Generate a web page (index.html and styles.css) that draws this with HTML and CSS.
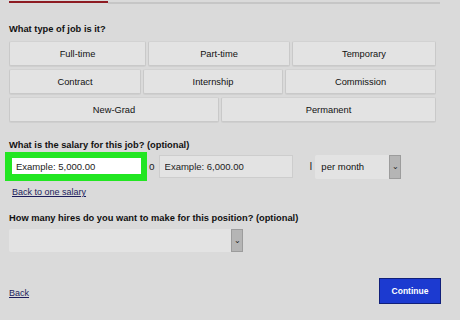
FILE: index.html
```html
<!DOCTYPE html>
<html lang="en">
<head>
    <meta charset="UTF-8">
    <meta name="viewport" content="width=device-width, initial-scale=1.0">
    <title>Job Details</title>
    <link rel="stylesheet" href="styles.css">
</head>
<body>
    <div class="progress">
        <div class="progress-done"></div>
        <div class="progress-rest"></div>
    </div>

    <form class="job-form">
        <h3 class="label">What type of job is it?</h3>
        <div class="choice-row row-a">
            <button type="button" class="choice">Full-time</button>
            <button type="button" class="choice">Part-time</button>
            <button type="button" class="choice">Temporary</button>
        </div>
        <div class="choice-row row-b">
            <button type="button" class="choice">Contract</button>
            <button type="button" class="choice">Internship</button>
            <button type="button" class="choice">Commission</button>
        </div>
        <div class="choice-row row-c">
            <button type="button" class="choice">New-Grad</button>
            <button type="button" class="choice">Permanent</button>
        </div>

        <h3 class="label salary-label">What is the salary for this job? (optional)</h3>
        <div class="salary-row">
            <div class="highlight">
                <input type="text" class="salary-from" placeholder="Example: 5,000.00">
            </div>
            <span class="sep">o</span>
            <input type="text" class="salary-to" placeholder="Example: 6,000.00">
            <span class="sep sep-per">I</span>
            <div class="select period">
                <span class="select-value">per month</span>
                <span class="select-arrow">&#8964;</span>
            </div>
        </div>
        <a href="#" class="small-link">Back to one salary</a>

        <h3 class="label hires-label">How many hires do you want to make for this position? (optional)</h3>
        <div class="select hires">
            <span class="select-value"></span>
            <span class="select-arrow">&#8964;</span>
        </div>

        <div class="footer">
            <a href="#" class="back-link">Back</a>
            <button type="button" class="continue-button">Continue</button>
        </div>
    </form>
</body>
</html>
```

FILE: styles.css
```css
body {
    margin: 0;
    font-family: "Liberation Sans", Arial, sans-serif;
    background-color: #dadada;
    color: #111;
}
.progress {
    display: flex;
    align-items: flex-start;
    margin: 1px 20px 0 9px;
}
.progress-done {
    width: 99px;
    height: 2px;
    background-color: #8e1b22;
}
.progress-rest {
    flex: 1;
    height: 2px;
    margin-top: 1px;
    background-color: #c6c6c6;
}
.job-form {
    padding: 0 24px 0 9px;
}
.label {
    font-size: 9.3px;
    font-weight: bold;
    line-height: 11px;
    margin: 20px 0 6px;
}
.choice-row {
    display: grid;
    column-gap: 2px;
    margin-bottom: 3px;
}
.row-a {
    grid-template-columns: 137fr 142fr 144fr;
}
.row-b {
    grid-template-columns: 132fr 140fr 151fr;
}
.row-c {
    grid-template-columns: 210fr 215fr;
}
.choice {
    height: 25px;
    font-family: inherit;
    font-size: 9.3px;
    color: #111;
    background-color: #e3e3e3;
    border: 1px solid #c9c9c9;
    border-top-color: #d2d2d2;
    border-radius: 2px;
    box-shadow: 0 1px 0 #cfcfcf;
}
.salary-label {
    margin: 18px 0 1px;
}
.salary-row {
    display: flex;
    align-items: center;
    margin-left: -4px;
}
.highlight {
    border: 6px solid #22e622;
    border-bottom-width: 7px;
    border-left-width: 7px;
}
.highlight input {
    display: block;
    width: 129px;
    height: 16px;
    box-sizing: border-box;
    border: none;
    padding: 0 4px;
    background-color: #fff;
    font-family: inherit;
    font-size: 9.5px;
}
input::placeholder {
    color: #222;
}
.sep {
    font-size: 10px;
    color: #222;
    margin: 0 4px 0 2px;
}
.salary-to {
    width: 134px;
    height: 23px;
    box-sizing: border-box;
    border: 1px solid #cdcdcd;
    padding: 0 5px;
    background-color: #e3e3e3;
    font-family: inherit;
    font-size: 9.5px;
}
.sep-per {
    margin: 0 3px 0 17px;
}
.select {
    display: flex;
    align-items: stretch;
    height: 24px;
    box-sizing: border-box;
    background-color: #e3e3e3;
    border-radius: 2px;
}
.select-value {
    flex: 1;
    display: flex;
    align-items: center;
    padding-left: 6px;
    font-size: 9.5px;
}
.select-arrow {
    width: 10px;
    display: flex;
    align-items: center;
    justify-content: center;
    font-size: 8px;
    line-height: 1;
    color: #222;
    background-color: #b5b5b5;
    border: 1px solid #9c9c9c;
}
.period {
    width: 86px;
}
.small-link {
    display: inline-block;
    margin: 0 0 0 3px;
    font-size: 9px;
    line-height: 10px;
    color: #1d1d5c;
}
.hires-label {
    margin: 14px 0 5px;
}
.hires {
    width: 234px;
    height: 23px;
}
.footer {
    display: flex;
    justify-content: space-between;
    align-items: center;
    margin: 26px -5px 0 0;
}
.back-link {
    font-size: 9px;
    color: #1d1d5c;
    padding-top: 3px;
}
.continue-button {
    width: 62px;
    height: 26px;
    font-family: inherit;
    font-size: 8.5px;
    font-weight: bold;
    color: #fff;
    background-color: #1c3ad0;
    border: 1px solid #101f7a;
    cursor: pointer;
}
```
